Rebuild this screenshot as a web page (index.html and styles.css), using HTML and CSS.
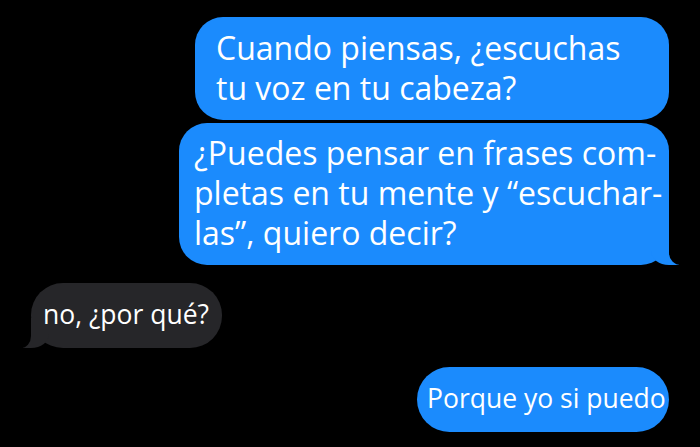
FILE: index.html
```html
<!DOCTYPE html>
<html lang="es">
  <head>
    <meta charset="UTF-8" />
    <meta name="viewport" content="width=device-width, initial-scale=1.0" />
    <title>Mensajes</title>
    <link rel="stylesheet" href="styles.css">
  </head>
  <body>
    <div class="chat">
      <div class="bubble sent big first">Cuando piensas, ¿escuchas tu voz en tu cabeza?</div>
      <div class="bubble sent big second tail">¿Puedes pensar en frases com-pletas en tu mente y “escuchar-las”, quiero decir?</div>
      <div class="bubble received tail">no, ¿por qué?</div>
      <div class="bubble sent small last">Porque yo si puedo</div>
    </div>
  </body>
</html>
```

FILE: styles.css
```css
/* Global styles */
body {
  margin: 0;
  background-color: #000000;
  font-family: "Open Sans", "Noto Sans", sans-serif;
  color: #ffffff;
}

.chat {
  display: flex;
  flex-direction: column;
  padding: 17px 31px 0 31px;
}

/* Bubbles */
.bubble {
  position: relative;
  z-index: 0;
  box-sizing: border-box;
}

.sent {
  align-self: flex-end;
  background-color: #1b8bfd;
}

.received {
  align-self: flex-start;
  background-color: #262629;
  margin-top: 18px;
  width: 191px;
  height: 65px;
  padding: 0 8px 0 12px;
  border-radius: 32px;
  font-size: 26.5px;
  line-height: 63px;
  white-space: nowrap;
}

.big {
  font-size: 32px;
  line-height: 40px;
}

.first {
  width: 474px;
  padding: 11px 30px 12px 21px;
  border-radius: 28px;
}

.second {
  margin-top: 3px;
  width: 490px;
  padding: 10px 4px 12px 15px;
  border-radius: 28px;
}

.small {
  margin-top: 19px;
  width: 252px;
  height: 65px;
  padding: 0 4px 0 10px;
  border-radius: 33px;
  font-size: 26.5px;
  line-height: 63px;
  white-space: nowrap;
}

/* Tails */
.tail::before,
.tail::after {
  content: "";
  position: absolute;
  z-index: -1;
  bottom: 0;
  height: 30px;
}

.tail::before {
  background-color: inherit;
}

.tail::after {
  background-color: #000000;
}

.sent.tail::before {
  right: -10px;
  width: 28px;
  border-bottom-left-radius: 18px 14px;
}

.sent.tail::after {
  right: -30px;
  width: 30px;
  border-bottom-left-radius: 12px 12px;
}

.received.tail::before {
  left: -8px;
  width: 26px;
  border-bottom-right-radius: 18px 14px;
}

.received.tail::after {
  left: -30px;
  width: 30px;
  border-bottom-right-radius: 10px 12px;
}
```
